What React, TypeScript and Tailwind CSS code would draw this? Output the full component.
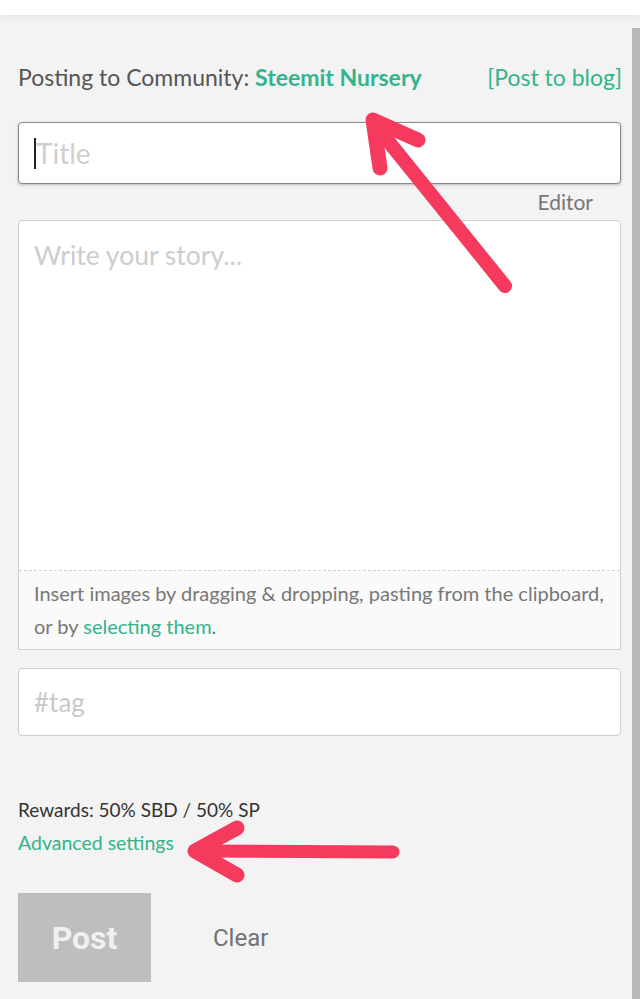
const green = "text-[#34b38c]";

function Arrows() {
  return (
    <svg className="pointer-events-none absolute left-0 top-0" width="640" height="999" viewBox="0 0 640 999">
      <g fill="none" stroke="#f53a5e" strokeLinecap="round" strokeLinejoin="round">
        <path d="M505 286 L376 126" strokeWidth="14" />
        <path d="M380 168 L373 120 L418 140" strokeWidth="15" />
        <path d="M393 852 L200 851" strokeWidth="13" />
        <path d="M237 828 L195 851 L237 875" strokeWidth="15" />
      </g>
    </svg>
  );
}

export default function App() {
  return (
    <div className="relative h-[999px] w-[640px] overflow-hidden bg-[#f3f3f3] font-['Lato',sans-serif]">
      <div className="h-[15px] bg-white shadow-[0_2px_6px_rgba(0,0,0,0.06)]" />
      <div className="flex">
        <div className="flex w-[632px] flex-col pl-[18px] pr-[11px]">
          <div className="mt-[48px] flex h-[28px] items-center justify-between text-[23px]">
            <p className="text-[#555]">
              Posting to Community: <span className={`font-bold ${green}`}>Steemit Nursery</span>
            </p>
            <span className={`${green} mr-[-1px]`}>[Post to blog]</span>
          </div>

          <div className="mt-[31px] flex h-[62px] items-center rounded-[4px] border border-[#8a8a8a] bg-white px-[15px] shadow-[0_1px_3px_rgba(0,0,0,0.25)]">
            <span className="h-[31px] w-[2px] bg-[#222]" />
            <span className="text-[28px] text-[#cfcfcf]">Title</span>
          </div>

          <div className="flex h-[36px] items-center justify-end pr-[28px] text-[21px] text-[#777]">Editor</div>

          <div className="flex h-[430px] flex-col overflow-hidden rounded-t-[4px] border border-[#cfcfcf] bg-white">
            <div className="h-[350px] border-b border-dashed border-[#d0d0d0] px-[15px] pt-[15px] text-[26.5px] text-[#cdcdcd]">
              Write your story...
            </div>
            <div className="flex-1 bg-[#fafafa] px-[15px] pt-[6px] text-[20px] leading-[33px] text-[#777]">
              Insert images by dragging &amp; dropping, pasting from the clipboard, or by{" "}
              <span className={green}>selecting them</span>.
            </div>
          </div>

          <div className="mt-[18px] flex h-[68px] items-center rounded-[4px] border border-[#cfcfcf] bg-white px-[15px] text-[26px] text-[#c8c8c8]">
            #tag
          </div>

          <p className="mt-[61px] text-[19px] leading-[26px] text-[#333]">Rewards: 50% SBD / 50% SP</p>
          <p className={`mt-[7px] text-[19.5px] leading-[26px] ${green}`}>Advanced settings</p>

          <div className="mt-[37px] flex items-center font-['Roboto',sans-serif]">
            <div className="flex h-[89px] w-[133px] items-center justify-center bg-[#bdbebf] text-[32px] font-bold text-[#f0f0f0]">
              Post
            </div>
            <span className="ml-[62px] text-[24px] text-[#6e7378]">Clear</span>
          </div>
        </div>
        <div className="mt-[13px] h-[990px] w-[8px] bg-[#b8b8b8]" />
      </div>
      <Arrows />
    </div>
  );
}
